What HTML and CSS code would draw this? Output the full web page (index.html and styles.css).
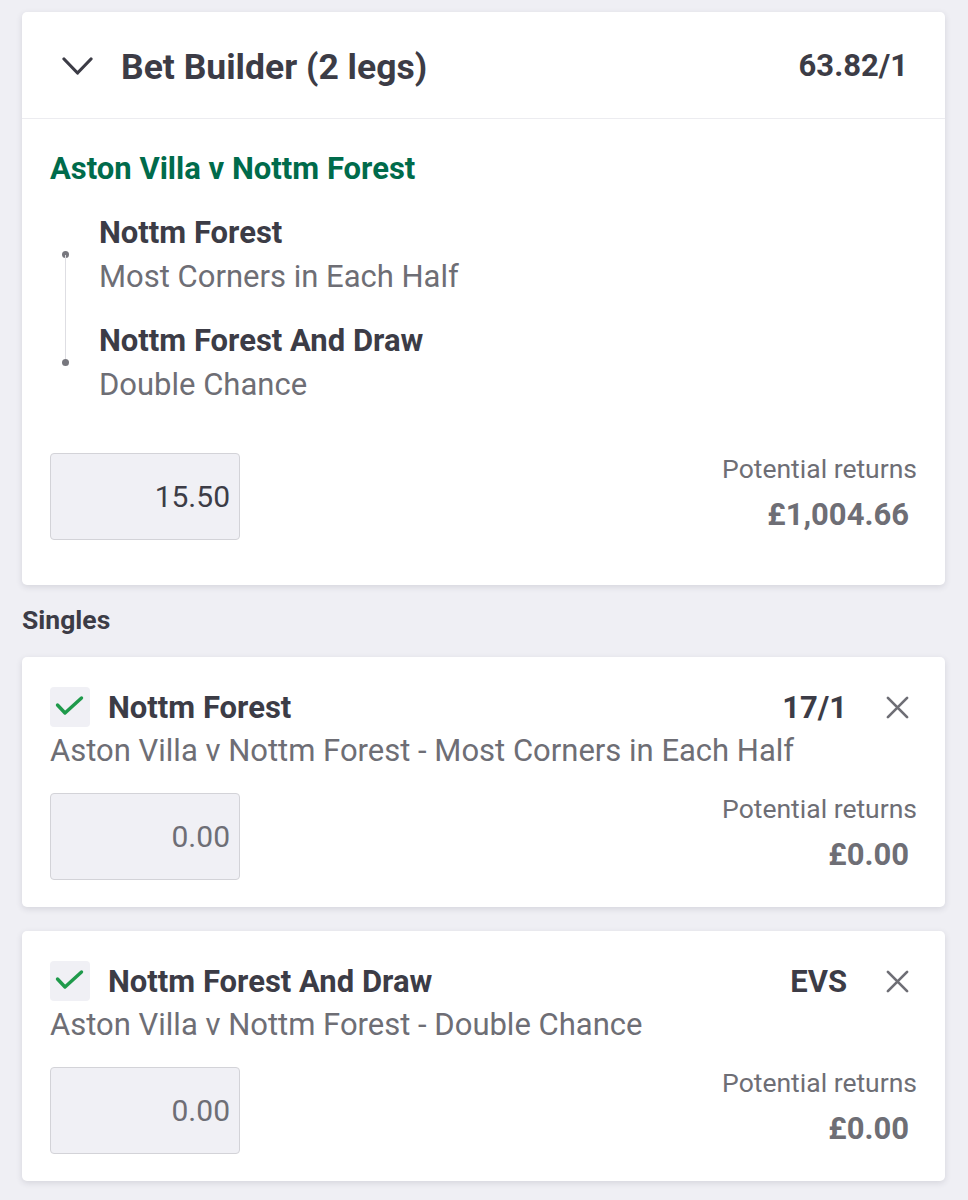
FILE: index.html
```html
<!DOCTYPE html>
<html lang="en">
<head>
<meta charset="utf-8">
<title>Bet slip</title>
<link rel="stylesheet" href="styles.css">
</head>
<body>
<div class="page">
  <section class="card bb">
    <header class="bb-head">
      <svg class="chevron" width="31" height="20" viewBox="0 0 31 20" aria-hidden="true"><polyline points="2,3 15.5,17 29,3" fill="none" stroke="#3c3c46" stroke-width="3.2" stroke-linecap="round" stroke-linejoin="round"/></svg>
      <h1 class="bb-title">Bet Builder (2 legs)</h1>
      <span class="bb-odds">63.82/1</span>
    </header>
    <div class="bb-body">
      <h2 class="event">Aston Villa v Nottm Forest</h2>
      <ul class="legs">
        <li class="leg">
          <div class="leg-title">Nottm Forest</div>
          <div class="leg-market">Most Corners in Each Half</div>
        </li>
        <li class="leg">
          <div class="leg-title">Nottm Forest And Draw</div>
          <div class="leg-market">Double Chance</div>
        </li>
      </ul>
      <div class="stake-row">
        <div class="stake filled">15.50</div>
        <div class="returns">
          <span class="ret-label">Potential returns</span>
          <span class="ret-value">£1,004.66</span>
        </div>
      </div>
    </div>
  </section>

  <h3 class="section-label">Singles</h3>

  <section class="card single">
    <div class="single-head">
      <span class="check"><svg width="40" height="40" viewBox="0 0 40 40" aria-hidden="true"><polyline points="7.5,18 15,26 31.5,11" fill="none" stroke="#1f9a4b" stroke-width="3.4" stroke-linecap="round" stroke-linejoin="round"/></svg></span>
      <span class="single-title">Nottm Forest</span>
      <span class="single-odds">17/1</span>
      <span class="close"><svg width="24" height="24" viewBox="0 0 24 24" aria-hidden="true"><path d="M2 2 L22 22 M22 2 L2 22" stroke="#6e6e75" stroke-width="2.8" stroke-linecap="round"/></svg></span>
    </div>
    <div class="single-sub">Aston Villa v Nottm Forest - Most Corners in Each Half</div>
    <div class="stake-row">
      <div class="stake">0.00</div>
      <div class="returns">
        <span class="ret-label">Potential returns</span>
        <span class="ret-value">£0.00</span>
      </div>
    </div>
  </section>

  <section class="card single">
    <div class="single-head">
      <span class="check"><svg width="40" height="40" viewBox="0 0 40 40" aria-hidden="true"><polyline points="7.5,18 15,26 31.5,11" fill="none" stroke="#1f9a4b" stroke-width="3.4" stroke-linecap="round" stroke-linejoin="round"/></svg></span>
      <span class="single-title">Nottm Forest And Draw</span>
      <span class="single-odds">EVS</span>
      <span class="close"><svg width="24" height="24" viewBox="0 0 24 24" aria-hidden="true"><path d="M2 2 L22 22 M22 2 L2 22" stroke="#6e6e75" stroke-width="2.8" stroke-linecap="round"/></svg></span>
    </div>
    <div class="single-sub">Aston Villa v Nottm Forest - Double Chance</div>
    <div class="stake-row">
      <div class="stake">0.00</div>
      <div class="returns">
        <span class="ret-label">Potential returns</span>
        <span class="ret-value">£0.00</span>
      </div>
    </div>
  </section>
</div>
</body>
</html>
```

FILE: styles.css
```css
* { box-sizing: border-box; }
html, body { margin: 0; padding: 0; }
body {
  background: #efeff4;
  font-family: Roboto, "Liberation Sans", Arial, sans-serif;
  color: #3c3c46;
}
.page {
  padding: 12px 23px 20px 22px;
  display: flex;
  flex-direction: column;
}
.card {
  background: #fff;
  border-radius: 5px;
  box-shadow: 0 2px 6px rgba(40, 40, 60, 0.13);
}
.bb-head {
  height: 107px;
  display: flex;
  align-items: center;
  padding: 0 37px 0 40px;
  border-bottom: 1px solid #ececf0;
}
.chevron { flex: none; margin-right: 28px; margin-top: 2px; }
.bb-title {
  flex: 1;
  margin: 3px 0 0 0;
  font-size: 35.5px;
  font-weight: 700;
  line-height: 40px;
}
.bb-odds {
  margin-top: 2px;
  font-size: 31px;
  font-weight: 700;
  line-height: 36px;
}
.bb-body {
  padding: 32px 28px 45px 28px;
}
.event {
  margin: 0;
  font-size: 31px;
  font-weight: 700;
  line-height: 36px;
  color: #006b4b;
}
.legs {
  list-style: none;
  margin: 24px 0 0 0;
  padding: 0 0 0 49px;
}
.leg { position: relative; }
.leg + .leg { margin-top: 20px; }
.leg::before {
  content: "";
  position: absolute;
  left: -37px;
  top: 40px;
  width: 7px;
  height: 7px;
  border-radius: 50%;
  background: #77777e;
}
.leg:not(:last-child)::after {
  content: "";
  position: absolute;
  left: -34px;
  top: 44px;
  width: 1px;
  height: 108px;
  background: #dedee3;
}
.leg-title {
  font-size: 31px;
  font-weight: 700;
  line-height: 44px;
}
.leg-market {
  font-size: 31px;
  font-weight: 400;
  line-height: 44px;
  color: #6e6e75;
}
.stake-row {
  display: flex;
  justify-content: space-between;
  align-items: flex-start;
}
.bb .stake-row { margin-top: 46px; }
.stake {
  width: 190px;
  height: 87px;
  background: #f0f0f5;
  border: 1.5px solid #d3d3d8;
  border-radius: 4px;
  display: flex;
  align-items: center;
  justify-content: flex-end;
  padding-right: 9px;
  font-size: 30px;
  color: #6e6e75;
}
.stake.filled { color: #3c3c46; }
.returns {
  display: flex;
  flex-direction: column;
  align-items: flex-end;
  padding-top: 1px;
}
.ret-label {
  font-size: 26.5px;
  line-height: 30px;
  color: #6e6e75;
}
.ret-value {
  margin-top: 13px;
  padding-right: 8px;
  font-size: 31px;
  font-weight: 700;
  line-height: 36px;
  color: #6e6e75;
}
.section-label {
  margin: 20px 0 22px 0;
  font-size: 26.5px;
  font-weight: 700;
  line-height: 30px;
}
.single {
  padding: 30px 28px 27px 28px;
}
.single + .single { margin-top: 24px; }
.single-head {
  display: flex;
  align-items: center;
  height: 40px;
}
.check {
  flex: none;
  width: 40px;
  height: 40px;
  border-radius: 4px;
  background: #f0f0f5;
  margin-right: 18px;
}
.check svg { display: block; }
.single-title {
  flex: 1;
  font-size: 31px;
  font-weight: 700;
}
.single-odds {
  font-size: 31px;
  font-weight: 700;
  margin-right: 30px;
}
.close {
  flex: none;
  width: 40px;
  height: 40px;
  display: flex;
  align-items: center;
  justify-content: center;
}
.close svg { display: block; width: 23px; height: 23px; }
.single-sub {
  margin-top: 6px;
  font-size: 31px;
  line-height: 36px;
  color: #6e6e75;
}
.single .stake-row { margin-top: 24px; }
```
